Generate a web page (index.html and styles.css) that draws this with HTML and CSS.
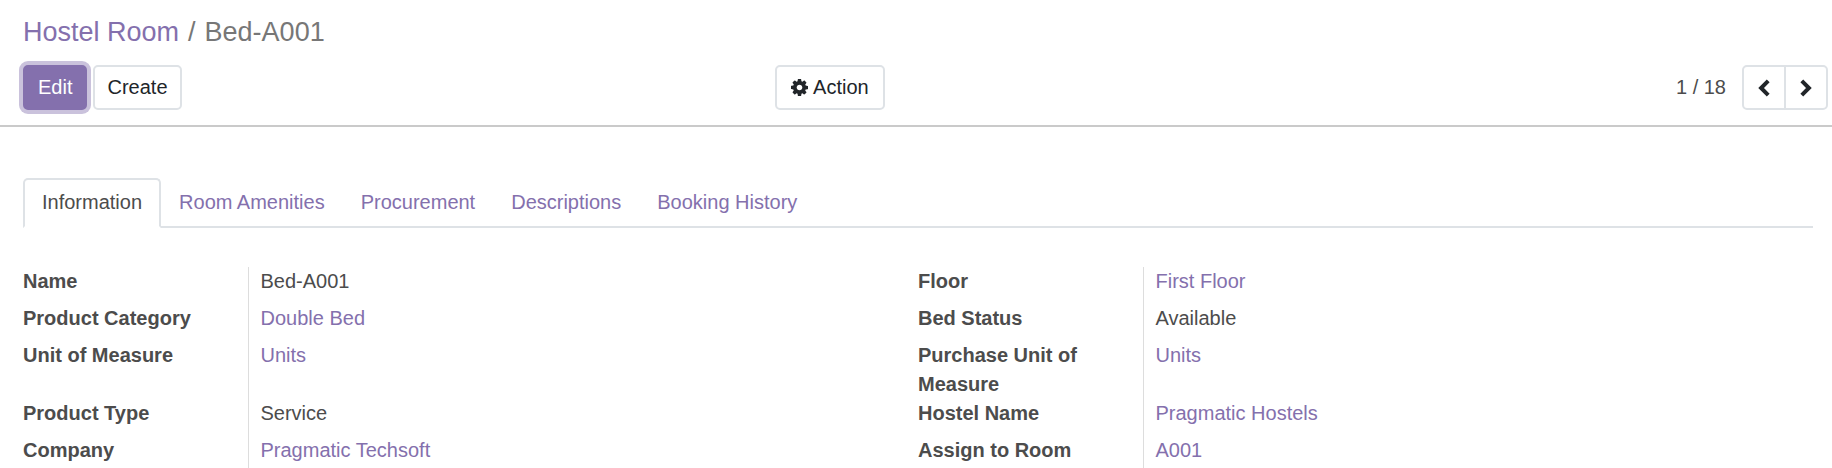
FILE: index.html
```
<!DOCTYPE html>
<html lang="en">
<head>
    <meta charset="UTF-8">
    <meta name="viewport" content="width=device-width, initial-scale=1.0">
    <title>Bed-A001 - Hostel Room</title>
    <link rel="stylesheet" href="styles.css">
</head>
<body>

    <header class="control-panel">
        <nav class="breadcrumb">
            <a href="#">Hostel Room</a>
            <span class="separator">/</span>
            <span>Bed-A001</span>
        </nav>

        <div class="toolbar">
            <div class="buttons">
                <button type="button" class="btn btn-primary">Edit</button>
                <button type="button" class="btn">Create</button>
            </div>
            <div class="actions">
                <button type="button" class="btn btn-action">
                    <svg class="icon-gear" viewBox="0 0 1536 1536" aria-hidden="true">
                        <path d="M1024 768q0-106-75-181t-181-75-181 75-75 181 75 181 181 75 181-75 75-181zm512-109v222q0 12-8 23t-20 13l-185 28q-19 54-39 91 35 50 107 138 10 12 10 25t-9 23q-27 37-99 108t-94 71q-12 0-26-9l-138-108q-44 23-91 38-16 136-29 186-7 28-36 28H657q-14 0-24.500-8.500T621 1506l-28-184q-49-16-90-37l-141 107q-10 9-25 9-14 0-25-11-126-114-165-168-7-10-7-23 0-12 8-23 15-21 51-66.500t54-70.500q-27-50-41-99L29 913q-13-2-21-12.500T0 877V655q0-12 8-23t19-13l186-28q14-46 39-92-40-57-107-138-10-12-10-24 0-10 9-23 26-36 98.500-107.500T337 135q13 0 26 10l138 107q44-23 91-38 16-136 29-186 7-28 36-28h222q14 0 24.500 8.500T915 30l28 184q49 16 90 37l142-107q9-9 24-9 13 0 25 10 129 119 165 170 7 8 7 22 0 12-8 23-15 21-51 66.500t-54 70.500q26 50 41 98l183 28q13 2 21 12.500t8 23.500z"/>
                    </svg>
                    Action
                </button>
                <div class="pager">
                    <span>1 / 18</span>
                    <div class="btn-group">
                        <button type="button" class="btn btn-icon" aria-label="Previous">
                            <svg class="icon-chevron" viewBox="0 0 14 18" aria-hidden="true"><path d="M11.200 1.900L4.100 9l7.100 7.100"/></svg>
                        </button>
                        <button type="button" class="btn btn-icon" aria-label="Next">
                            <svg class="icon-chevron" viewBox="0 0 14 18" aria-hidden="true"><path d="M2.800 1.900L9.900 9l-7.100 7.100"/></svg>
                        </button>
                    </div>
                </div>
            </div>
        </div>
    </header>

    <main class="sheet">
        <nav class="tabs">
            <a href="#" class="tab active">Information</a>
            <a href="#" class="tab">Room Amenities</a>
            <a href="#" class="tab">Procurement</a>
            <a href="#" class="tab">Descriptions</a>
            <a href="#" class="tab">Booking History</a>
        </nav>

        <div class="groups">
            <table class="group">
                <tr><th scope="row">Name</th><td>Bed-A001</td></tr>
                <tr><th scope="row">Product Category</th><td><a href="#">Double Bed</a></td></tr>
                <tr class="tall"><th scope="row">Unit of Measure</th><td><a href="#">Units</a></td></tr>
                <tr><th scope="row">Product Type</th><td>Service</td></tr>
                <tr><th scope="row">Company</th><td><a href="#">Pragmatic Techsoft</a></td></tr>
            </table>
            <table class="group">
                <tr><th scope="row">Floor</th><td><a href="#">First Floor</a></td></tr>
                <tr><th scope="row">Bed Status</th><td>Available</td></tr>
                <tr class="tall"><th scope="row">Purchase Unit of Measure</th><td><a href="#">Units</a></td></tr>
                <tr><th scope="row">Hostel Name</th><td><a href="#">Pragmatic Hostels</a></td></tr>
                <tr><th scope="row">Assign to Room</th><td><a href="#">A001</a></td></tr>
            </table>
        </div>
    </main>

</body>
</html>
```
FILE: styles.css
```
* {
    margin: 0;
    padding: 0;
    box-sizing: border-box;
}

body {
    height: 100vh;
    display: flex;
    flex-direction: column;
    overflow: hidden;
    background: #fff;
    color: #4c4c4c;
    font-family: "Liberation Sans", Arial, sans-serif;
    font-size: 20px;
    line-height: 29px;
}

a {
    color: #8470ad;
    text-decoration: none;
}

.control-panel {
    padding: 12px 4px 15px 23px;
    border-bottom: 2px solid #cacaca;
}

.breadcrumb {
    display: flex;
    gap: 9px;
    margin-bottom: 13px;
    font-size: 27px;
    line-height: 40px;
    color: #777;
}

.toolbar {
    display: grid;
    grid-template-columns: 5fr 7fr;
    align-items: center;
}

.buttons {
    display: flex;
    gap: 6px;
}

.actions {
    display: flex;
    align-items: center;
    justify-content: space-between;
}

.btn {
    height: 45px;
    padding: 0 12px;
    border: 2px solid #dee2e6;
    border-radius: 5px;
    background: #fff;
    color: #212529;
    font: inherit;
    cursor: pointer;
}

.btn-primary {
    padding: 0 13px;
    border-color: #8470ad;
    background: #8470ad;
    color: #fff;
    box-shadow: 0 0 0 4px #cac2dc;
}

.btn-action {
    display: flex;
    align-items: center;
    gap: 5px;
    padding: 0 14px;
}

.icon-gear {
    width: 17px;
    height: 17px;
    fill: #212529;
}

.pager {
    display: flex;
    align-items: center;
    gap: 16px;
}

.btn-group {
    display: flex;
}

.btn-icon {
    display: flex;
    align-items: center;
    justify-content: center;
    width: 44px;
    padding: 0;
}

.btn-icon:first-child {
    border-radius: 5px 0 0 5px;
}

.btn-icon:last-child {
    margin-left: -2px;
    border-radius: 0 5px 5px 0;
}

.icon-chevron {
    width: 14px;
    height: 18px;
    fill: none;
    stroke: #212529;
    stroke-width: 4;
}

.sheet {
    flex: 1;
    min-height: 0;
    padding: 51px 19px 0 23px;
}

.tabs {
    display: flex;
    border-bottom: 2px solid #dee2e6;
}

.tab {
    margin-bottom: -2px;
    padding: 8px 16px 9px;
    border: 2px solid transparent;
    border-radius: 5px 5px 0 0;
}

.tab.active {
    padding: 8px 17px 9px;
    border-color: #dee2e6 #dee2e6 #fff;
    background: #fff;
    color: #4c4c4c;
}

.groups {
    display: grid;
    grid-template-columns: 1fr 1fr;
    margin-top: 39px;
}

.group {
    width: 100%;
    border-collapse: collapse;
    table-layout: fixed;
}

.group th {
    width: 225px;
    padding-right: 16px;
    text-align: left;
    vertical-align: top;
}

.group td {
    padding: 0 0 8px 12px;
    border-left: 1px solid #ddd;
    vertical-align: top;
}

.tall {
    height: 58px;
}
```
